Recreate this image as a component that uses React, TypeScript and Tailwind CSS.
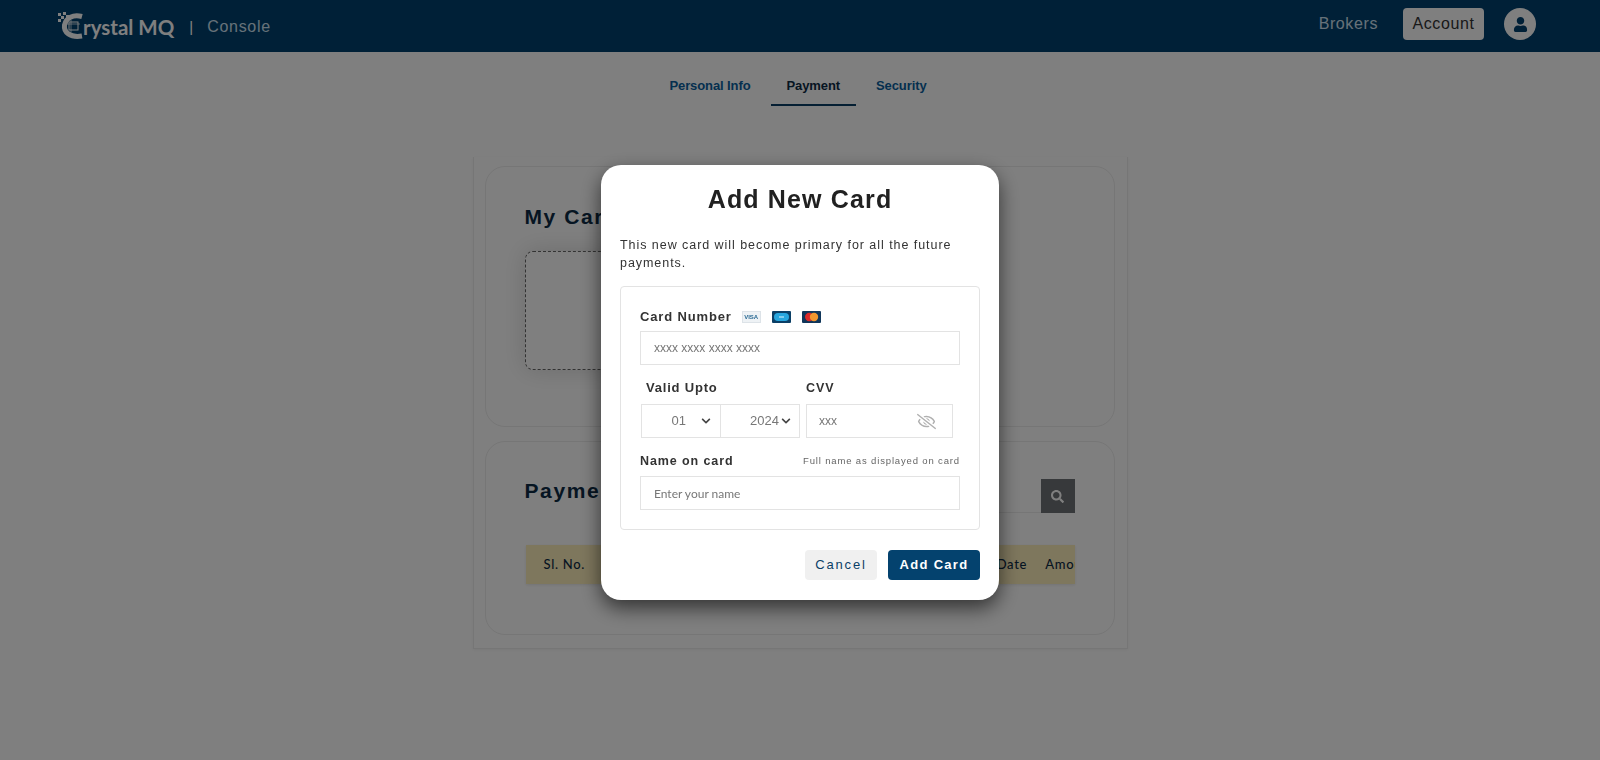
import { FaChevronDown, FaRegEyeSlash, FaSearch, FaUser } from 'react-icons/fa';

const sans = 'font-["Liberation_Sans",Arial,sans-serif]';

function CrystalMark() {
  return (
    <svg width="26" height="30" viewBox="0 0 26 30" className="shrink-0">
      <rect x="0" y="2" width="3" height="3" fill="#fff" />
      <rect x="5" y="1" width="3" height="3" fill="#fff" />
      <rect x="3" y="5" width="3" height="3" fill="#fff" />
      <rect x="8" y="4" width="3" height="3" fill="#fff" />
      <rect x="0" y="8" width="3" height="3" fill="#fff" />
      <path d="M24 5.5 C15 3 8 7 6.5 14 C5.5 21 12 27 24 25" fill="none" stroke="#fff" strokeWidth="5" />
      <rect x="11" y="11" width="9" height="8" fill="none" stroke="#fff" strokeWidth="1" />
      <path d="M9 13h13M13 9v12" stroke="#fff" strokeWidth="0.7" />
    </svg>
  );
}

function VisaIcon() {
  return (
    <span className='flex h-[12px] w-[19px] items-center justify-center bg-[#eef2f5] border border-[#dde3e8] font-["Liberation_Sans",sans-serif] text-[6px] font-bold leading-none text-[#2a6a94]'>
      VISA
    </span>
  );
}

function AmexIcon() {
  return (
    <svg width="19" height="12" viewBox="0 0 19 12">
      <rect width="19" height="12" rx="1" fill="#0b3f66" />
      <rect x="2" y="2" width="15" height="8" rx="4" fill="#27a6de" />
      <path d="M7 6h5" stroke="#bfe6f7" strokeWidth="1.2" />
    </svg>
  );
}

function MastercardIcon() {
  return (
    <svg width="19" height="12" viewBox="0 0 19 12">
      <rect width="19" height="12" rx="1" fill="#10365a" />
      <circle cx="7.2" cy="6" r="4.2" fill="#dc2a2a" />
      <circle cx="12" cy="6" r="4.2" fill="#f0962e" />
    </svg>
  );
}

function Tab({ label, active }: { label: string; active?: boolean }) {
  return (
    <div
      className={`px-4 pt-[26px] pb-[10px] text-[13px] font-bold leading-[16px] tracking-[-0.1px] border-b-2 ${
        active ? 'text-[#0d2b45] border-[#0b3f66]' : 'text-[#0a5f9e] border-transparent'
      }`}
    >
      {label}
    </div>
  );
}

function SelectBox({ value, className }: { value: string; className: string }) {
  return (
    <div className={`flex h-[34px] items-center justify-end border border-[#e3e3e3] text-[13px] text-[#777] ${className}`}>
      <span>{value}</span>
      <FaChevronDown className="text-[10px] text-[#444]" />
    </div>
  );
}

function AddCardModal() {
  return (
    <div className="fixed inset-0 flex justify-center bg-black/50 pt-[165px]">
      <div className={`h-[435px] w-[398px] rounded-[20px] bg-white px-[19px] pt-[20px] shadow-[0_8px_20px_rgba(0,0,0,0.6)] ${sans}`}>
        <h2 className="text-center text-[25px] font-bold leading-[29px] tracking-[1.15px] text-[#212121]">Add New Card</h2>
        <p className="mt-[22px] text-[12.5px] leading-[18px] tracking-[0.95px] text-[#333]">
          This new card will become primary for all the future payments.
        </p>
        <div className="mt-[14px] h-[244px] rounded-[4px] border border-[#e3e3e3] px-[19px] pt-[20px]">
          <div className="flex h-[20px] items-center">
            <label className="text-[13px] font-bold tracking-[0.85px] text-[#333]">Card Number</label>
            <div className="ml-[10px] flex gap-[11px]">
              <VisaIcon />
              <AmexIcon />
              <MastercardIcon />
            </div>
          </div>
          <input
            placeholder="xxxx xxxx xxxx xxxx"
            className="mt-[4px] block h-[34px] w-[320px] border border-[#e3e3e3] px-[13px] text-[12px] outline-none placeholder:text-[#777]"
          />
          <div className="mt-[10px] flex">
            <div className="w-[166px] pl-[6px]">
              <label className="text-[13px] font-bold leading-[20px] tracking-[0.8px] text-[#333]">Valid Upto</label>
              <div className="-ml-[5px] mt-[5px] flex">
                <SelectBox value="01" className="w-[80px] gap-[15px] pr-[9px]" />
                <SelectBox value="2024" className="w-[80px] -ml-px gap-[2px] pr-[8px]" />
              </div>
            </div>
            <div>
              <label className="text-[12.5px] font-bold leading-[20px] tracking-[0.9px] text-[#333]">CVV</label>
              <div className="mt-[5px] flex h-[34px] w-[147px] items-center justify-between border border-[#e3e3e3] pl-[12px] pr-[16px] text-[12px] text-[#777]">
                <span>xxx</span>
                <FaRegEyeSlash className="text-[19px] text-[#b0b0b0]" />
              </div>
            </div>
          </div>
          <div className="mt-[13px] flex w-[320px] items-center justify-between">
            <label className="text-[12.5px] font-bold leading-[20px] tracking-[0.9px] text-[#333]">Name on card</label>
            <span className="text-[9.5px] tracking-[0.85px] text-[#666]">Full name as displayed on card</span>
          </div>
          <input
            placeholder="Enter your name"
            className='mt-[5px] block h-[34px] w-[320px] border border-[#e3e3e3] px-[13px] font-["Lato",sans-serif] text-[12px] outline-none placeholder:text-[#777]'
          />
        </div>
        <div className="mt-[20px] flex justify-end gap-[11px]">
          <button className="h-[30px] w-[72px] rounded-[4px] bg-[#f0f0f0] text-[13px] tracking-[1.8px] text-[#0b3f66]">Cancel</button>
          <button className="h-[30px] w-[92px] rounded-[4px] bg-[#04426e] text-[13px] font-bold tracking-[1.3px] text-white">Add Card</button>
        </div>
      </div>
    </div>
  );
}

export default function App() {
  return (
    <div className={`relative h-screen overflow-hidden bg-white ${sans}`}>
      <header className="flex h-[52px] items-center justify-between bg-[#00406f] pl-[58px] pr-[64px]">
        <div className="flex items-center text-white">
          <CrystalMark />
          <span className='-ml-[1px] mt-[3px] font-["Lato",sans-serif] text-[20.5px] font-bold leading-none'>rystal MQ</span>
          <span className="ml-[15px] mt-[2px] text-[15px]">|</span>
          <span className="ml-[14px] mt-[2px] text-[16px] tracking-[0.7px] text-[#cfe3f2]">Console</span>
        </div>
        <div className="mb-[4px] flex items-center">
          <span className="text-[16px] tracking-[0.6px] text-[#cfe3f2]">Brokers</span>
          <span className="ml-[25px] flex h-[32px] w-[81px] items-center justify-center rounded-[4px] bg-white text-[16px] tracking-[0.6px] text-[#333]">
            Account
          </span>
          <span className="ml-[20px] flex h-[32px] w-[32px] items-center justify-center rounded-full bg-white text-[#00406f]">
            <FaUser className="text-[15px]" />
          </span>
        </div>
      </header>

      <nav className="flex justify-center gap-[4px] pr-[4px]">
        <Tab label="Personal Info" />
        <Tab label="Payment" active />
        <Tab label="Security" />
      </nav>

      <main className="mx-auto mt-[51px] h-[492px] w-[655px] border-x border-b border-[#ededed] pl-[11px] pr-[12px] pt-[9px] shadow-[0_1px_3px_rgba(0,0,0,0.06)]">
        <section className="h-[261px] rounded-[20px] border border-[#ececec] px-[39px] pt-[37px]">
          <h3 className="text-[21px] font-bold leading-[26px] tracking-[1.6px] text-[#0d2b45]">My Cards</h3>
          <div className="mt-[21px] h-[119px] w-[300px] rounded-[8px] border border-dashed border-[#666] shadow-[0_0_24px_rgba(0,0,0,0.15)]" />
        </section>
        <section className="mt-[14px] h-[194px] rounded-[20px] border border-[#ececec] pl-[39px] pr-[39px] pt-[37px]">
          <div className="flex items-center justify-between">
            <h3 className="-mt-[10px] text-[21px] font-bold leading-[26px] tracking-[1.6px] text-[#0d2b45]">Payment History</h3>
            <div className="flex h-[34px] w-[200px] justify-end border-b border-[#ececec]">
              <span className="flex h-[34px] w-[34px] items-center justify-center bg-[#6f7376] text-[13px] text-white">
                <FaSearch />
              </span>
            </div>
          </div>
          <div className='ml-px mt-[32px] flex h-[39px] w-[549px] items-center justify-between overflow-hidden bg-[#fdeebb] pl-[18px] font-["Lato",sans-serif] text-[13px] font-medium tracking-[0.7px] text-[#0d2b45] shadow-[0_1px_3px_rgba(0,0,0,0.1)]'>
            <span>Sl. No.</span>
            <span className="-mr-[21px] flex gap-[18px]">
              <span>Date</span>
              <span>Amount</span>
            </span>
          </div>
        </section>
      </main>

      <AddCardModal />
    </div>
  );
}
